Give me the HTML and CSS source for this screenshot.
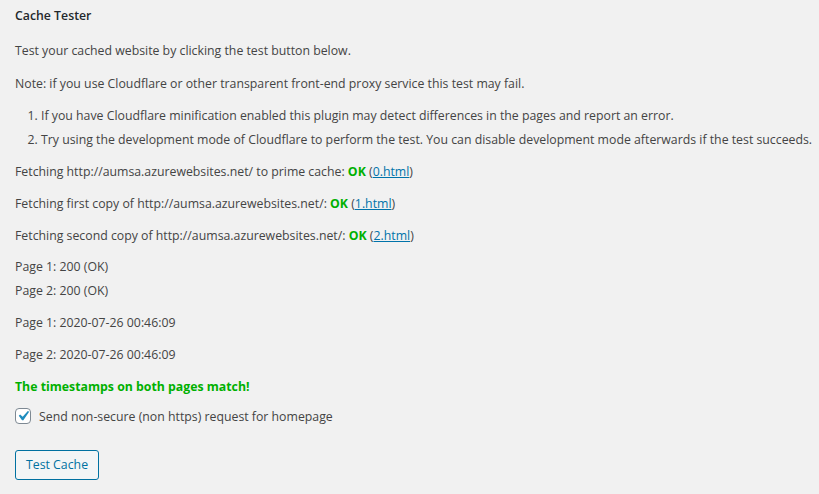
FILE: index.html
```html
<!DOCTYPE html>
<html>
<head>
<meta charset="utf-8">
<link rel="stylesheet" href="styles.css">
</head>
<body>
<div class="wrap">
  <h3 class="title">Cache Tester</h3>
  <p class="intro">Test your cached website by clicking the test button below.</p>
  <p class="note">Note: if you use Cloudflare or other transparent front-end proxy service this test may fail.</p>
  <ol class="tips">
    <li>If you have Cloudflare minification enabled this plugin may detect differences in the pages and report an error.</li>
    <li>Try using the development mode of Cloudflare to perform the test. You can disable development mode afterwards if the test succeeds.</li>
  </ol>
  <p class="fetch first">Fetching http://aumsa.azurewebsites.net/ to prime cache: <span class="ok">OK</span> (<a href="#">0.html</a>)</p>
  <p class="fetch">Fetching first copy of http://aumsa.azurewebsites.net/: <span class="ok">OK</span> (<a href="#">1.html</a>)</p>
  <p class="fetch">Fetching second copy of http://aumsa.azurewebsites.net/: <span class="ok">OK</span> (<a href="#">2.html</a>)</p>
  <p class="status">Page 1: 200 (OK)<br>Page 2: 200 (OK)</p>
  <p class="stamp first">Page 1: 2020-07-26 00:46:09</p>
  <p class="stamp">Page 2: 2020-07-26 00:46:09</p>
  <p class="match">The timestamps on both pages match!</p>
  <label class="check-row">
    <span class="checkbox"><svg viewBox="0 0 20 20" width="20" height="20"><path d="M14.83 4.89l1.34.94-5.81 8.38H9.02L5.78 9.67l1.34-1.25 2.57 2.4z" fill="#1e8cbe"/></svg></span>
    <span class="check-label">Send non-secure (non https) request for homepage</span>
  </label>
  <div class="actions"><button class="button">Test Cache</button></div>
</div>
</body>
</html>
```
FILE: styles.css
```css
html, body {
  margin: 0;
  padding: 0;
  background: #f1f1f1;
}
body {
  font-family: "Open Sans", "Noto Sans", sans-serif;
  font-size: 12.3px;
  color: #444;
}
.wrap {
  padding: 6px 0 0 15px;
  display: flex;
  flex-direction: column;
  align-items: flex-start;
}
.title {
  margin: 0;
  font-size: 12.3px;
  font-weight: 600;
  line-height: 20px;
  color: #23282d;
}
p {
  margin: 0;
  line-height: 20px;
  white-space: nowrap;
}
.intro { margin-top: 15px; }
.note { margin-top: 13px; }
.tips {
  margin: 13px 0 0 0;
  padding-left: 26px;
}
.tips li {
  line-height: 18px;
  margin-bottom: 6px;
  white-space: nowrap;
}
.tips li:last-child { margin-bottom: 0; }
.fetch { margin-top: 12px; }
.fetch.first { margin-top: 13px; }
.ok {
  color: #00b000;
  font-weight: 700;
}
a {
  color: #0073aa;
  text-decoration: underline;
}
.status {
  margin-top: 9px;
  line-height: 24px;
}
.stamp { margin-top: 12px; }
.stamp.first { margin-top: 10px; }
.match {
  margin-top: 12px;
  font-weight: 700;
  color: #00b000;
}
.check-row {
  margin-top: 9px;
  display: flex;
  align-items: center;
  gap: 8px;
  height: 20px;
}
.checkbox {
  box-sizing: border-box;
  width: 16px;
  height: 16px;
  border: 1px solid #7e8993;
  border-radius: 4px;
  background: #fff;
  display: flex;
  align-items: center;
  justify-content: center;
  overflow: hidden;
}
.checkbox svg {
  flex: none;
  margin: -3px;
}
.actions { margin-top: 24px; }
.button {
  box-sizing: border-box;
  height: 30px;
  padding: 0 10px;
  font-family: inherit;
  font-size: 12.3px;
  line-height: 28px;
  color: #0071a1;
  background: #f3f5f6;
  border: 1px solid #0071a1;
  border-radius: 3px;
  cursor: pointer;
}
```
